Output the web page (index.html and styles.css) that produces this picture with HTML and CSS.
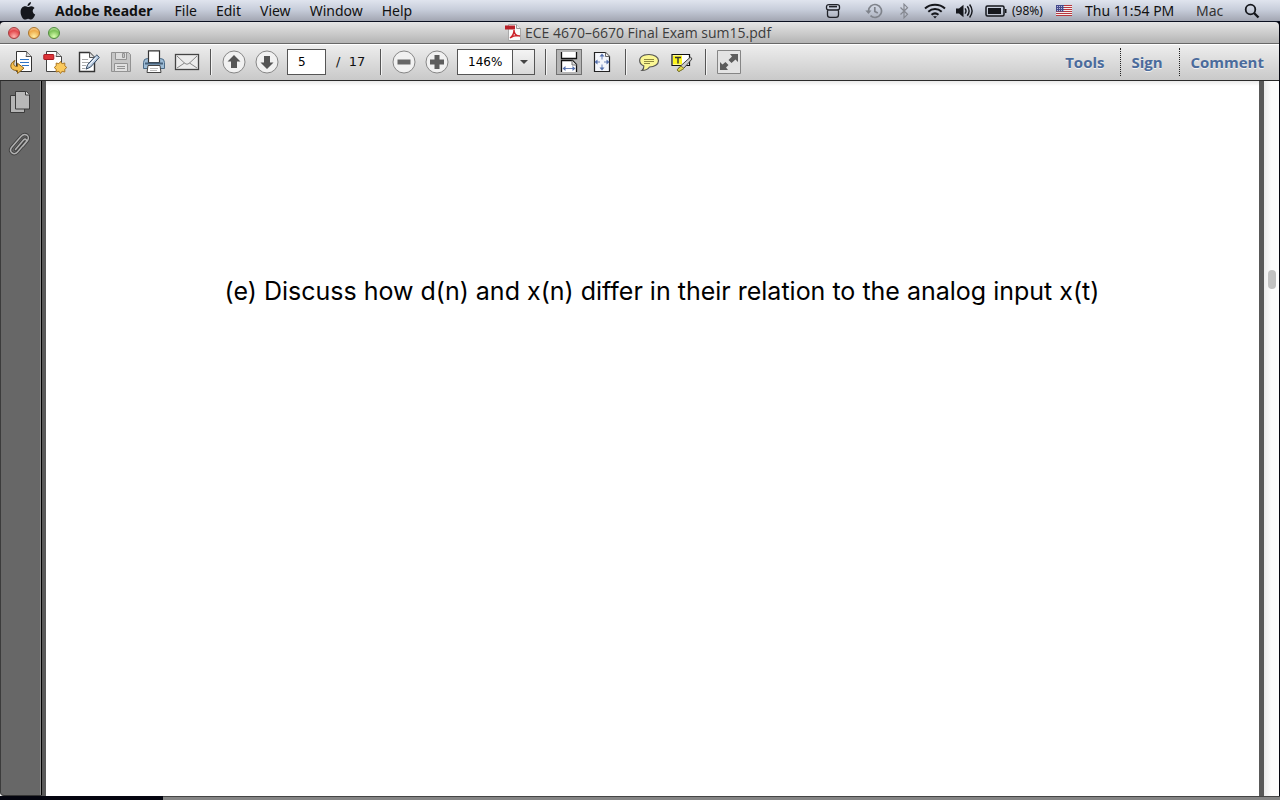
FILE: index.html
```html
<!DOCTYPE html>
<html lang="en">
<head>
<meta charset="utf-8">
<title>ECE 4670-6670 Final Exam sum15.pdf</title>
<link rel="stylesheet" href="styles.css">
</head>
<body>
<header class="menubar">
  <nav class="menus" aria-label="Application menu">
    <button class="apple" aria-label="Apple menu"><svg width="16" height="18" viewBox="0 0 16 18"><path d="M11 0c.2 2-1.600 4-3.500 4C7.300 2.200 9 .3 11 0zM8 5c.9 0 1.700-.8 3.200-.8 1.500 0 2.700.8 3.400 1.900-2.800 1.700-2.300 5.300.6 6.500-.8 2.300-2.300 4.900-4 4.900-1.300 0-1.700-.8-3.100-.8s-1.900.8-3.100.8C3 17.500.6 13.700.6 9.900.6 6.400 2.800 4.300 5 4.300c1.400 0 2.200.7 3 .7z" fill="#15171c"/></svg></button>
    <button class="menu app">Adobe Reader</button>
    <button class="menu">File</button>
    <button class="menu">Edit</button>
    <button class="menu">View</button>
    <button class="menu">Window</button>
    <button class="menu">Help</button>
  </nav>
  <div class="status">
    <svg class="s-disk" width="16" height="16" viewBox="0 0 16 16" fill="none" stroke="#202228" stroke-width="1.300"><path d="M1.500 3.800Q1.500 1.700 4 1.700h8q2.500 0 2.500 2.100v1.400Q14.500 7 12 7H4Q1.500 7 1.500 5.200zM2.500 7.500V12q0 2.300 2.500 2.300h6q2.500 0 2.500-2.300V7.500"/><path d="M4 3.600h8" stroke-width="1.600"/></svg>
    <svg class="s-time" width="18" height="16" viewBox="0 0 18 16" fill="none" stroke="#7f838b" stroke-width="1.700"><path d="M3.500 8a6.500 6.500 0 1 1 2 4.700M9.800 4v4.500l3 1.500"/><path d="M.3 7.500h6.200l-3 3.600z" fill="#7f838b" stroke="none"/></svg>
    <svg class="s-blue" width="10" height="16" viewBox="0 0 10 16" fill="none" stroke="#858890" stroke-width="1.200"><path d="M1.500 4.500l7 6.800L5 14.800V1.200l3.500 3.500-7 6.800"/></svg>
    <svg class="s-wifi" width="22" height="16" viewBox="0 0 22 16" fill="none" stroke="#15171c" stroke-width="2"><path d="M1 5.500c5.500-5 14.500-5 20 0M4.300 8.700c4-3.500 9.400-3.500 13.400 0M7.500 11.800c2.200-1.800 4.800-1.800 7 0"/><path d="M9 13.300h4l-2 2.200z" fill="#15171c" stroke="none"/></svg>
    <svg class="s-sound" width="18" height="16" viewBox="0 0 18 16" fill="none" stroke="#15171c" stroke-width="1.400"><path d="M1 5.500h3l4.500-3.700v12.400L4 10.500H1z" fill="#15171c" stroke="none"/><path d="M10 5.300q2 2.700 0 5.400M12.300 3.300q3.600 4.700 0 9.400M14.600 1.500q5 6.500 0 13"/></svg>
    <svg class="s-battery" width="22" height="14" viewBox="0 0 22 14"><rect x="1" y="2" width="18" height="10" rx="1.500" fill="none" stroke="#15171c" stroke-width="1.500"/><path d="M3 4h13v6H3zM20 5h1.500v4H20z" fill="#15171c"/></svg>
    <span class="percent">(98%)</span>
    <svg class="s-flag" width="16" height="11" viewBox="0 0 16 11"><path d="M0 0h16v11H0z" fill="#f3eeee"/><path d="M0 .5h16M0 2.500h16M0 4.500h16M0 6.500h16M0 8.500h16M0 10.500h16" stroke="#b8363d"/><path d="M0 0h8v6.500H0z" fill="#454a8c"/><path d="M1 1.500h7M1 3.500h7M1 5.500h7" stroke="#b9bcdb" stroke-dasharray="1 1"/></svg>
    <time class="clock">Thu 11:54 PM</time>
    <span class="user">Mac</span>
    <button class="search" aria-label="Spotlight"><svg width="16" height="16" viewBox="0 0 16 16" fill="none" stroke="#15171c" stroke-width="1.800"><circle cx="6.500" cy="6.500" r="4.800"/><path d="M10 10l4.500 4.500" stroke-width="2.400"/></svg></button>
  </div>
</header>
<main class="window">
  <div class="titlebar">
    <div class="lights">
      <button class="light red" aria-label="Close"></button>
      <button class="light amber" aria-label="Minimize"></button>
      <button class="light green" aria-label="Zoom"></button>
    </div>
    <h1 class="title"><svg width="17" height="17" viewBox="0 0 17 17"><path d="M3.500.5h8l4 4v12h-12z" fill="#fafafa" stroke="#aaa"/><path d="M11.500.5v4h4" fill="#eee" stroke="#999"/><path d="M0 1.500h10v4H0z" fill="#b82028"/><path d="M5 14c3-2 4-5 4-8 0 4 2 6 6 6-4-1-7 0-10 2z" fill="none" stroke="#cc2027" stroke-width="1.400"/></svg><span>ECE 4670–6670 Final Exam sum15.pdf</span></h1>
  </div>
  <div class="toolbar">
    <div class="tools">
      <button class="tool" aria-label="Open"><svg width="24" height="24" viewBox="0 0 24 24"><path d="M6.500 1.500h10l5 5v15h-15z" fill="#fff" stroke="#333" stroke-linejoin="round"/><path d="M16.500 1.500c1 2-.5 4-.5 5h5.500" fill="#ddd" stroke="#555"/><path d="M10 9.500h9M10 12.500h9M12 15.500h7" stroke="#2e74c5"/><path d="M5 10.500C-1 13-1 21 7.500 20.500v3l6.500-5.300-6.500-5v3.300c-3.500.3-5-2.500-2.500-6z" fill="#f6c04e" stroke="#8c6218" stroke-linejoin="round"/></svg></button>
      <button class="tool" aria-label="Create PDF"><svg width="24" height="24" viewBox="0 0 24 24"><path d="M3.500 1.500h10l5 5v15h-15z" fill="#fff" stroke="#444"/><path d="M13.500 1.500c1 2-.5 4-.5 5h5.500" fill="#ddd" stroke="#555"/><rect x=".8" y="4.500" width="10" height="5" rx=".6" fill="#dd3438" stroke="#a61821"/><path d="M17.500 11.500l1.600 2.200 2.700-.7v2.800l2 1.700-2 1.700v2.800l-2.700-.7-1.600 2.200-1.600-2.200-2.700.7v-2.800l-2-1.700 2-1.700V13l2.700.7z" fill="#fac95c" stroke="#ad7925"/></svg></button>
      <button class="tool" aria-label="Edit"><svg width="24" height="24" viewBox="0 0 24 24"><path d="M3.500 2.500h10l5 5v14h-15z" fill="#fff" stroke="#333" stroke-width="1.400"/><path d="M13.500 2.500v5h5" fill="#ddd" stroke="#555"/><path d="M6 9.500h6M6 12.500h7M6 15.500h4M6 18.500h3" stroke="#aaa"/><path d="M21.500 5.500l1.700 2-8.600 9.600-4.600 2 1.700-4.600 8.300-9c.6-.6 1.500-.6 1.500 0z" fill="#b9cde4" stroke="#33475f"/><path d="M12.500 16l7.500-8.500" stroke="#fff"/></svg></button>
      <button class="tool" aria-label="Save" disabled><svg width="24" height="24" viewBox="0 0 24 24" fill="#c6c6c6" stroke="#929292"><path d="M2.500 2.500h17l2 2v17h-19z"/><path d="M6.500 2.500h11v7h-11z" fill="#ddd"/><path d="M13.500 3.500h2v4h-2z"/><path d="M5.500 13.500h13v8h-13z" fill="#e0e0e0"/><path d="M8 16.500h8M8 18.500h8"/></svg></button>
      <button class="tool" aria-label="Print"><svg width="24" height="24" viewBox="0 0 24 24"><path d="M1.500 12.500q0-4 4-4h13q4 0 4 4v6h-21z" fill="#9dbcd6" stroke="#4a6a86"/><path d="M6.500.8h11v11.700h-11z" fill="#fff" stroke="#333" stroke-width="1.200"/><path d="M3 13.500h18" stroke="#46627c" stroke-width="2"/><path d="M6 15.500h12l1 7H5z" fill="#fff" stroke="#444"/><path d="M8 18.500h8M8 20.500h7" stroke="#bbb"/></svg></button>
      <button class="tool" aria-label="Email"><svg width="26" height="24" viewBox="0 0 26 24" fill="none"><rect x="1.500" y="4.500" width="23" height="15" fill="#ececec" stroke="#444" stroke-width="1.300"/><path d="M3 6l8 7.500q2 1.500 4 0L23 6M3 18l7.500-5M23 18l-7.500-5" stroke="#888"/></svg></button>
      <span class="sep"></span>
      <button class="tool" aria-label="Previous page"><svg width="24" height="24" viewBox="0 0 24 24"><circle cx="12" cy="12" r="11" fill="#f1f1f1" stroke="#868686"/><path d="M12 5l6.500 6.500H15V18H9v-6.500H5.500z" fill="#555"/></svg></button>
      <button class="tool" aria-label="Next page"><svg width="24" height="24" viewBox="0 0 24 24"><circle cx="12" cy="12" r="11" fill="#f1f1f1" stroke="#868686"/><path d="M12 19l6.500-6.500H15V6H9v6.500H5.500z" fill="#555"/></svg></button>
      <input class="page-no" type="text" value="5" aria-label="Page number">
      <span class="page-total">/&nbsp; 17</span>
      <span class="sep"></span>
      <button class="tool" aria-label="Zoom out"><svg width="24" height="24" viewBox="0 0 24 24"><circle cx="12" cy="12" r="11" fill="#f1f1f1" stroke="#868686"/><path d="M5.500 9.500h13v5h-13z" fill="#666"/></svg></button>
      <button class="tool" aria-label="Zoom in"><svg width="24" height="24" viewBox="0 0 24 24"><circle cx="12" cy="12" r="11" fill="#f1f1f1" stroke="#868686"/><path d="M9.500 5h5v4.500H19v5h-4.500V19h-5v-4.500H5v-5h4.500z" fill="#5d5d5d"/></svg></button>
      <div class="zoom"><select class="zoom-select" aria-label="Zoom level"><option>146%</option></select><span class="zoom-arrow"></span></div>
      <span class="sep"></span>
      <button class="tool" aria-label="Fit width" aria-pressed="true"><svg class="pressed" width="26" height="26" viewBox="0 0 26 26"><path d="M5.500 3v6.500h15V3" fill="#fff" stroke="#111" stroke-width="1.300"/><path d="M5.500 23V11.500h11l4 4V23" fill="#fff" stroke="#111" stroke-width="1.300"/><path d="M16 11.500v4.500h4.500" fill="#ddd" stroke="#777"/><path d="M7 19.500h12" stroke="#6b82b8"/><path d="M6.500 19.500l3-2.500v5zM19.500 19.500l-3-2.500v5z" fill="#5570ad"/></svg></button>
      <button class="tool" aria-label="Fit page"><svg width="20" height="24" viewBox="0 0 20 24"><path d="M2.500 2.500h11l4 4v15h-15z" fill="#f4f6fb" stroke="#222" stroke-width="1.200"/><path d="M13.500 2.500v4h4" fill="#eee" stroke="#666"/><path d="M10 5v4.500M10 14.500V19M5 12h3M12 12h3" stroke="#6b82b8"/><path d="M10 3.500l2.500 3h-5zM10 20.500l2.500-3h-5zM2.500 12l3-2.500v5zM17.500 12l-3-2.500v5z" fill="#5570ad"/></svg></button>
      <span class="sep"></span>
      <button class="tool" aria-label="Add note"><svg width="24" height="24" viewBox="0 0 24 24"><path d="M12 4.500c5.300 0 9.500 2.600 9.500 6.300s-4.200 6.200-9 6.200Q10 20.500 5 20.500q2-1.500 1.800-4.500C1 13.500 1.500 7 7 5.200q2.500-.7 5-.7z" fill="#fbf795" stroke="#555" stroke-width="1.200"/><path d="M7 9.500h10M7 11.500h10M7 13.500h6" stroke="#8d8842"/></svg></button>
      <button class="tool" aria-label="Highlight text"><svg width="24" height="24" viewBox="0 0 24 24"><path d="M2 4.500h17.500v11H2z" fill="#fff" stroke="#111" stroke-width="1.200"/><path d="M3 5.500h9v9H3z" fill="#fcf51d"/><path d="M5 7.500h6M8 7.500v6" stroke="#333" stroke-width="1.400"/><path d="M20.500 7l1.500 2-8 9-5 3.500-2-1.500 3-3.500z" fill="#ccc" stroke="#444"/><path d="M11 16l3 2.500-5 3-2-1.500z" fill="#e0d64c" stroke="#827b29"/></svg></button>
      <span class="sep"></span>
      <button class="tool" aria-label="Read mode"><svg width="24" height="24" viewBox="0 0 24 24"><path d="M.5.500h23v23H.5z" fill="#e3e3e3" stroke="#858585"/><path d="M13 4h8v8l-2.500-2.500-4 3.500-3-3L15 6.500zM11 20H3v-8l2.500 2.500L8.500 12l3 3L9 17.500z" fill="#5c5c5c"/></svg></button>
    </div>
    <nav class="panels" aria-label="Panels">
      <button class="panel">Tools</button>
      <button class="panel">Sign</button>
      <button class="panel">Comment</button>
    </nav>
  </div>
  <div class="workspace">
    <aside class="sidebar">
      <button class="side" aria-label="Page thumbnails"><svg width="22" height="24" viewBox="0 0 22 24"><path d="M1.500 5.500h14v17h-14z" fill="#b4b4b4" stroke="#3b3b3b"/><path d="M6.500 1.500h11l3 3.500v14h-14z" fill="#b8b8b8" stroke="#3b3b3b"/><path d="M16.500 1.500V5h4" fill="#ddd" stroke="#3b3b3b"/></svg></button>
      <button class="side" aria-label="Attachments"><svg width="24" height="26" viewBox="0 0 24 26" fill="none" stroke-linecap="round"><path d="M7.500 17.500l8-9.500c2-2 4 0 2.500 2l-8.500 10C6 24 .5 20 3.500 15.500l9.500-11c4-4.500 9.500-.5 6.500 4l-4.500 5.500" stroke="#404040" stroke-width="3.400"/><path d="M7.500 17.500l8-9.500c2-2 4 0 2.500 2l-8.500 10C6 24 .5 20 3.500 15.500l9.500-11c4-4.500 9.500-.5 6.500 4l-4.500 5.500" stroke="#b0b0b0" stroke-width="1.500"/></svg></button>
    </aside>
    <article class="page"><p class="question">(e) Discuss how d(n) and x(n) differ in their relation to the analog input x(t)</p></article>
    <div class="scrollbar"><span class="thumb"></span></div>
  </div>
</main>
<footer class="desktop"><span class="dark"></span><span class="behind"></span></footer>
</body>
</html>
```
FILE: styles.css
```css
* { box-sizing: border-box; }
body {
  margin: 0;
  min-height: 100vh;
  display: flex;
  flex-direction: column;
  background: #05060f;
  font-family: "Open Sans", "Noto Sans", sans-serif;
  color: #111;
}
button { border: 0; padding: 0; background: none; font: inherit; color: inherit; }
svg { display: block; flex: none; }

.menubar {
  height: 22px;
  display: flex;
  justify-content: space-between;
  align-items: center;
  border-bottom: 1px solid #0b1020;
  background: linear-gradient(#e0e4ee, #c8cedb 45%, #a2a6b2);
  font-family: "Noto Sans", sans-serif;
  font-size: 14px;
  line-height: 20px;
  white-space: nowrap;
}
.menus { display: flex; align-items: center; gap: 19px; padding-left: 20px; }
.status { display: flex; align-items: center; padding-right: 20px; }
.app { padding-right: 3px; font-weight: 700; }
.s-time { margin-left: 24px; }
.s-blue { margin-left: 16px; }
.s-wifi { margin-left: 15px; }
.s-sound { margin-left: 9px; }
.s-battery { margin-left: 12px; }
.percent { margin-left: 5px; width: 32px; font-size: 12px; }
.s-flag { margin-left: 12px; }
.clock { margin-left: 13px; width: 95px; }
.user { margin-left: 16px; width: 28px; color: #333; }
.search { margin-left: 20px; }

.window {
  flex: 1;
  display: flex;
  flex-direction: column;
  margin-right: 1px;
}
.titlebar {
  height: 22px;
  position: relative;
  display: flex;
  align-items: center;
  justify-content: center;
  border-bottom: 1px solid #686868;
  border-radius: 4px 4px 0 0;
  background: linear-gradient(#e6e6e6, #b4b4b4);
}
.lights { position: absolute; left: 8px; top: 5px; display: flex; gap: 8px; }
.light { width: 12px; height: 12px; border-radius: 50%; border: 1px solid; }
.red { border-color: #a53a3c; background: radial-gradient(circle at 50% 85%, #ffb4ae, #e2474b 60%, #f4b0b0); }
.amber { border-color: #aa7328; background: radial-gradient(circle at 50% 85%, #ffeda0, #eeaa49 60%, #fbe0b5); }
.green { border-color: #4f8b3c; background: radial-gradient(circle at 50% 85%, #d9ffae, #7dc158 60%, #d2efc0); }
.title {
  margin: 0;
  padding-right: 3px;
  display: flex;
  align-items: center;
  gap: 3px;
  font-size: 14px;
  line-height: 20px;
  font-weight: 400;
  color: #3c3c3c;
}
.toolbar {
  height: 37px;
  display: flex;
  justify-content: space-between;
  align-items: center;
  padding-bottom: 2px;
  border-top: 1px solid #fff;
  border-bottom: 1px solid #2a2a2a;
  background: linear-gradient(#ededed, #c9c9c9);
}
.tools { display: flex; align-items: center; padding-left: 5px; }
.tool { width: 33px; height: 28px; display: flex; align-items: center; justify-content: center; }
.sep { width: 1px; height: 26px; margin: 0 6px 0 7px; background: #555; box-shadow: 1px 0 #f4f4f4; }
.page-no, .zoom-select {
  height: 26px;
  border: 1px solid #555;
  border-radius: 0;
  background: #fff;
  font-family: "DejaVu Sans", sans-serif;
  font-size: 12px;
  color: #000;
}
.page-no { width: 39px; margin-left: 4px; padding: 0 10px; }
.page-total { width: 47px; padding-left: 10px; font-family: "DejaVu Sans", sans-serif; font-size: 13px; white-space: nowrap; }
.zoom { position: relative; width: 78px; margin: 0 3px 0 4px; }
.zoom-select { display: block; width: 100%; appearance: none; padding: 0 0 0 10px; }
.zoom-arrow {
  position: absolute;
  top: 0;
  right: 0;
  width: 23px;
  height: 26px;
  display: flex;
  align-items: center;
  justify-content: center;
  border: 1px solid #555;
  background: linear-gradient(#f4f4f4, #d9d9d9);
  pointer-events: none;
}
.zoom-arrow::before { content: ""; border: 4px solid transparent; border-top-color: #444; border-bottom: 0; }
.pressed { background: #b5b5b5; outline: 1px solid #717171; outline-offset: -1px; }
.panels { display: flex; padding-right: 5px; }
.panel {
  min-width: 59px;
  height: 28px;
  padding: 0 10px;
  font-size: 15px;
  line-height: 26px;
  font-weight: 700;
  text-align: left;
  color: #4a6b9c;
  text-shadow: 0 1px #f2f2f2;
}
.panel:first-child { padding-right: 16px; }
.panel + .panel { border-left: 1px dotted #222; }

.workspace { flex: 1; display: flex; background: #fff; }
.sidebar {
  width: 42px;
  display: flex;
  flex-direction: column;
  align-items: center;
  gap: 18px;
  padding: 9px 3px 0 0;
  border-left: 1px solid #3b3b3b;
  border-right: 1px solid #000;
  border-bottom: 1px solid #333;
  border-bottom-left-radius: 4px;
  background: #676767;
  box-shadow: inset -1px 0 #8b8b8b;
}
.page {
  flex: 1;
  border: solid #595959;
  border-width: 0 5px 0 4px;
  background: linear-gradient(#e9e9e9, #fff 5px);
  text-align: center;
}
.question { margin: 193px 0 0 19px; font-family: Inter, sans-serif; font-size: 25px; line-height: 34px; color: #000; }
.scrollbar { width: 15px; background: linear-gradient(90deg, #ebebeb, #fdfdfd 50%); padding: 189px 3px 0 4px; border-bottom-right-radius: 4px; }
.thumb { display: block; height: 19px; border-radius: 4px; background: #c1c1c1; }
.desktop { display: flex; height: 4px; }
.dark { width: 163px; background: #04050f; }
.behind { flex: 1; border-top: 1px solid #444; background: #858585; }
```
